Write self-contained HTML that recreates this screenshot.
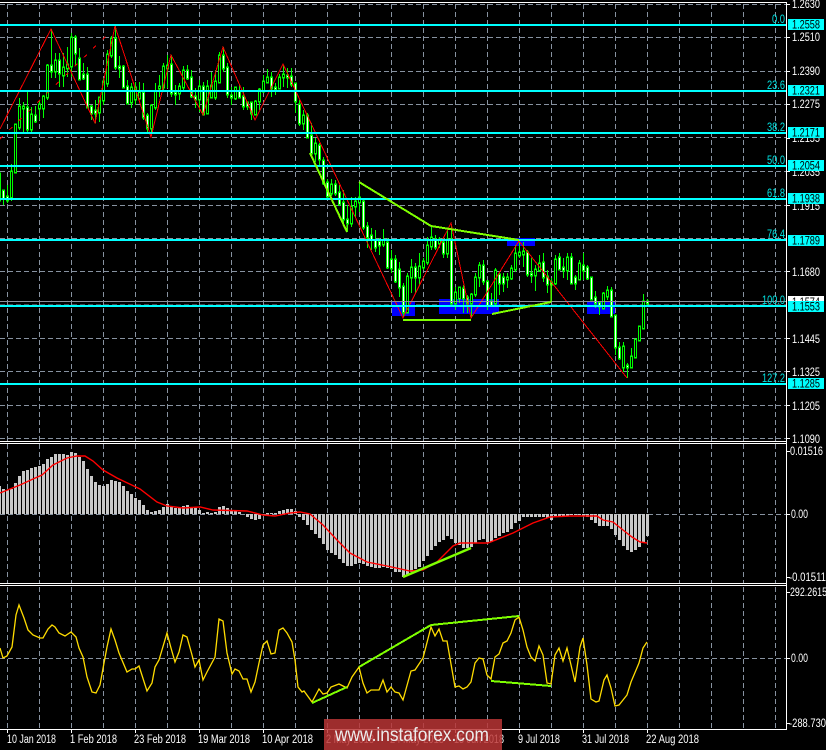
<!DOCTYPE html>
<html><head><meta charset="utf-8"><title>Chart</title>
<style>
html,body{margin:0;padding:0;background:#000;width:826px;height:750px;overflow:hidden}
svg{display:block;position:absolute;left:0;top:0}
text{font-family:"Liberation Sans",sans-serif;font-size:11.5px;fill:#fff}
.c{fill:#00e4e4}
</style></head><body>
<svg width="826" height="750" viewBox="0 0 826 750" xmlns="http://www.w3.org/2000/svg">
<rect width="826" height="750" fill="#000"/>
<defs>
<path id="bw" d="M-.5 174V200M11.5 172V197M15.5 125V172M19.5 107V127M23.5 107V108M31.5 115V129M39.5 105V108M43.5 97V108M47.5 66V97M55.5 61V71M63.5 68V75M67.5 65V68M71.5 38V66M99.5 98V112M103.5 82V100M107.5 55V83M111.5 39V55M131.5 88V102M135.5 88V99M139.5 93V98M151.5 106V128M155.5 92V107M159.5 87V88M163.5 67V87M167.5 66V68M179.5 87V93M183.5 71V87M199.5 87V99M207.5 87V113M211.5 86V97M215.5 82V97M219.5 56V82M235.5 88V98M255.5 102V114M259.5 90V101M263.5 82V91M267.5 78V82M279.5 78V88M283.5 75V77M303.5 116V123M315.5 144V153M331.5 185V193M351.5 207V223M355.5 202V206M359.5 198V202M383.5 241V244M407.5 277V312M411.5 268V277M419.5 267V277M423.5 262V267M427.5 246V262M431.5 238V246M439.5 240V243M447.5 240V253M455.5 293V303M459.5 288V298M471.5 295V303M475.5 278V294M479.5 266V277M495.5 271V303M507.5 278V279M511.5 269V278M515.5 254V269M519.5 253V255M523.5 252V254M535.5 270V275M539.5 264V270M555.5 260V283M567.5 258V270M579.5 264V279M603.5 294V308M607.5 291V296M623.5 347V367M631.5 357V367M635.5 340V357M639.5 327V340M643.5 302V328"/>
<path id="bb" d="M3.5 191V198M7.5 197V200M27.5 108V129M35.5 116V121M51.5 66V71M59.5 61V73M75.5 38V53M79.5 59V79M83.5 75V78M87.5 75V107M91.5 107V113M95.5 111V113M115.5 39V67M119.5 67V68M123.5 67V87M127.5 87V103M143.5 93V117M147.5 116V128M171.5 65V93M175.5 93V94M187.5 71V78M191.5 78V96M195.5 97V99M203.5 87V114M223.5 56V68M227.5 68V94M231.5 96V97M239.5 92V97M243.5 97V106M247.5 103V106M251.5 103V113M271.5 78V88M275.5 88V89M287.5 76V77M291.5 77V84M295.5 84V101M299.5 105V123M307.5 116V137M311.5 136V153M319.5 146V159M323.5 161V183M327.5 183V196M335.5 185V193M339.5 193V204M343.5 203V219M347.5 220V223M363.5 202V227M367.5 227V237M371.5 236V239M375.5 241V247M379.5 242V245M387.5 243V267M391.5 260V268M395.5 260V281M399.5 270V287M403.5 287V312M415.5 268V277M435.5 240V247M443.5 243V253M451.5 240V303M463.5 289V298M467.5 298V303M483.5 266V281M487.5 282V305M491.5 302V305M499.5 275V283M503.5 278V283M527.5 253V274M531.5 274V275M543.5 263V277M547.5 277V284M551.5 283V284M559.5 258V269M563.5 268V270M571.5 258V283M575.5 278V283M583.5 266V270M587.5 268V278M591.5 278V299M595.5 298V303M599.5 303V306M611.5 291V316M615.5 316V347M619.5 348V358M627.5 366V367M647.5 302V303"/>
</defs>

<!-- grid -->
<g shape-rendering="crispEdges" stroke="#8792a0" stroke-width="1" stroke-dasharray="5 3" fill="none">
<path d="M7.5 4V441M39.5 4V441M71.5 4V441M103.5 4V441M135.5 4V441M167.5 4V441M199.5 4V441M231.5 4V441M263.5 4V441M295.5 4V441M327.5 4V441M359.5 4V441M391.5 4V441M423.5 4V441M455.5 4V441M487.5 4V441M519.5 4V441M551.5 4V441M583.5 4V441M615.5 4V441M647.5 4V441M679.5 4V441M711.5 4V441M743.5 4V441M775.5 4V441"/>
<path d="M7.5 444V583M39.5 444V583M71.5 444V583M103.5 444V583M135.5 444V583M167.5 444V583M199.5 444V583M231.5 444V583M263.5 444V583M295.5 444V583M327.5 444V583M359.5 444V583M391.5 444V583M423.5 444V583M455.5 444V583M487.5 444V583M519.5 444V583M551.5 444V583M583.5 444V583M615.5 444V583M647.5 444V583M679.5 444V583M711.5 444V583M743.5 444V583M775.5 444V583"/>
<path d="M7.5 587V729M39.5 587V729M71.5 587V729M103.5 587V729M135.5 587V729M167.5 587V729M199.5 587V729M231.5 587V729M263.5 587V729M295.5 587V729M327.5 587V729M359.5 587V729M391.5 587V729M423.5 587V729M455.5 587V729M487.5 587V729M519.5 587V729M551.5 587V729M583.5 587V729M615.5 587V729M647.5 587V729M679.5 587V729M711.5 587V729M743.5 587V729M775.5 587V729"/>
<path d="M0 4.5H786M0 37.5H786M0 71.5H786M0 104.5H786M0 137.5H786M0 171.5H786M0 205.5H786M0 238.5H786M0 271.5H786M0 305H786M0 338.5H786M0 371.5H786M0 405.5H786M0 438.5H786M0 514.5H786M0 658.5H786"/>
</g>

<!-- blue zones -->
<g fill="#0000ff" shape-rendering="crispEdges">
<rect x="392" y="302" width="23" height="14"/>
<rect x="439" y="299" width="60" height="15"/>
<rect x="507" y="238" width="28" height="8"/>
<rect x="587" y="302" width="28" height="12"/>
</g>

<!-- candles -->
<g shape-rendering="crispEdges" fill="none">
<path stroke="#00ff00" stroke-width="1" d="M-.5 174V200M3.5 191V205M7.5 185V203M11.5 164V201M15.5 125V172M19.5 98V130M23.5 102V132M27.5 92V132M31.5 107V133M35.5 106V123M39.5 100V120M43.5 95V118M47.5 64V100M51.5 29V78M55.5 53V78M59.5 53V87M63.5 53V87M67.5 47V77M71.5 33V77M75.5 35V65M79.5 48V80M83.5 63V80M87.5 67V108M91.5 105V120M95.5 100V123M99.5 97V122M103.5 78V105M107.5 50V87M111.5 36V58M115.5 26V70M119.5 56V78M123.5 65V88M127.5 80V103M131.5 83V108M135.5 82V105M139.5 82V100M143.5 83V120M147.5 113V132M151.5 104V136M155.5 83V110M159.5 75V97M163.5 63V90M167.5 55V88M171.5 55V97M175.5 85V105M179.5 83V100M183.5 66V90M187.5 65V80M191.5 70V98M195.5 88V108M199.5 80V112M203.5 82V115M207.5 80V114M211.5 72V98M215.5 70V100M219.5 52V83M223.5 47V72M227.5 63V98M231.5 87V105M235.5 88V100M239.5 85V98M243.5 87V110M247.5 102V110M251.5 102V120M255.5 100V115M259.5 88V110M263.5 75V93M267.5 69V83M271.5 72V97M275.5 83V95M279.5 74V89M283.5 65V87M287.5 68V88M291.5 68V87M295.5 83V113M299.5 100V126M303.5 110V130M307.5 113V137M311.5 123V155M315.5 138V162M319.5 143V165M323.5 157V185M327.5 179V200M331.5 179V196M335.5 180V196M339.5 185V206M343.5 190V225M347.5 205V232M351.5 197V227M355.5 197V217M359.5 182V212M363.5 198V230M367.5 222V248M371.5 228V250M375.5 230V252M379.5 238V255M383.5 229V247M387.5 238V269M391.5 250V273M395.5 255V283M399.5 262V297M403.5 283V317M407.5 273V313M411.5 259V293M415.5 263V293M419.5 253V285M423.5 258V270M427.5 237V265M431.5 226V250M435.5 235V250M439.5 237V248M443.5 238V258M447.5 228V258M451.5 225V305M455.5 287V310M459.5 287V303M463.5 285V313M467.5 295V313M471.5 293V318M475.5 273V297M479.5 262V287M483.5 260V285M487.5 280V310M491.5 293V307M495.5 268V307M499.5 272V295M503.5 273V292M507.5 273V288M511.5 265V280M515.5 245V272M519.5 240V258M523.5 242V267M527.5 250V277M531.5 258V283M535.5 265V291M539.5 255V272M543.5 253V282M547.5 270V293M551.5 278V302M555.5 255V285M559.5 253V270M563.5 258V278M567.5 253V280M571.5 253V284M575.5 275V290M579.5 260V280M583.5 253V280M587.5 265V280M591.5 277V300M595.5 291V308M599.5 302V315M603.5 292V309M607.5 286V300M611.5 287V317M615.5 315V355M619.5 342V360M623.5 342V372M627.5 363V378M631.5 348V368M635.5 339V358M639.5 327V341M643.5 294V329M647.5 299V305"/>
<use href="#bw" stroke="#00ff00" stroke-width="3" stroke-linecap="square"/>
<use href="#bb" stroke="#00ff00" stroke-width="3" stroke-linecap="square"/>
<use href="#bw" stroke="#000" stroke-width="1"/>
<use href="#bb" stroke="#fff" stroke-width="1"/>
</g>

<!-- zigzag -->
<g fill="none" stroke="#ff0000" stroke-width="1" shape-rendering="crispEdges">
<polyline points="0,129 51,29 95,123 115,26 151,137 171,55 203,115 223,47 255,120 283,64 333,170 403,318 451,223 471,318 519,241 627,378"/>
<polyline points="0,139 110,32" stroke-dasharray="4 9"/>
</g>

<!-- ask line -->
<rect x="0" y="301" width="786" height="1" fill="#8a9099"/>

<!-- fibo -->
<g fill="#00ffff" shape-rendering="crispEdges">
<rect x="0" y="24" width="786" height="2"/>
<rect x="0" y="90" width="786" height="2"/>
<rect x="0" y="132" width="786" height="2"/>
<rect x="0" y="165" width="786" height="2"/>
<rect x="0" y="198" width="786" height="2"/>
<rect x="0" y="239" width="786" height="2"/>
<rect x="0" y="305" width="786" height="2"/>
<rect x="0" y="383" width="786" height="2"/>
</g>
<text class="c" x="772" y="23" textLength="13" lengthAdjust="spacingAndGlyphs">0.0</text>
<text class="c" x="767" y="89" textLength="18" lengthAdjust="spacingAndGlyphs">23.6</text>
<text class="c" x="767" y="131" textLength="18" lengthAdjust="spacingAndGlyphs">38.2</text>
<text class="c" x="767" y="164" textLength="18" lengthAdjust="spacingAndGlyphs">50.0</text>
<text class="c" x="767" y="197" textLength="18" lengthAdjust="spacingAndGlyphs">61.8</text>
<text class="c" x="767" y="238" textLength="18" lengthAdjust="spacingAndGlyphs">76.4</text>
<text class="c" x="762" y="304" textLength="23" lengthAdjust="spacingAndGlyphs">100.0</text>
<text class="c" x="762" y="382" textLength="23" lengthAdjust="spacingAndGlyphs">127.2</text>

<!-- green trend lines main -->
<g fill="none" stroke="#7fff00" stroke-width="2" shape-rendering="crispEdges">
<polyline points="310,153 347,232"/>
<polyline points="347,225 347,232" stroke-width="1"/>
<polyline points="359,182 431,226 519,240"/>
<polyline points="403,320 471,320"/>
<polyline points="492,314 551,302"/>
<polyline points="551,283 551,302" stroke-width="1"/>
</g>

<!-- MACD bars -->
<path shape-rendering="crispEdges" fill="none" stroke="#c8c8c8" stroke-width="3" d="M-.5 514V486M3.5 514V489M7.5 514V490M11.5 514V489M15.5 514V483M19.5 514V476M23.5 514V471M27.5 514V470M31.5 514V468M35.5 514V467M39.5 514V466M43.5 514V464M47.5 514V459M51.5 514V457M55.5 514V454M59.5 514V454M63.5 514V454M67.5 514V455M71.5 514V452M75.5 514V453M79.5 514V457M83.5 514V461M87.5 514V469M91.5 514V476M95.5 514V482M99.5 514V485M103.5 514V486M107.5 514V484M111.5 514V480M115.5 514V481M119.5 514V482M123.5 514V486M127.5 514V491M131.5 514V494M135.5 514V498M139.5 514V500M143.5 514V505M147.5 514V510M151.5 514V512M155.5 514V511M159.5 514V510M163.5 514V507M167.5 514V504M171.5 514V507M175.5 514V508M179.5 514V508M183.5 514V506M187.5 514V505M191.5 514V507M195.5 514V508M199.5 514V510M203.5 514V513M207.5 514V512M211.5 514V513M215.5 514V512M219.5 514V507M223.5 514V506M227.5 514V508M231.5 514V510M235.5 514V511M239.5 514V512M247.5 514V517M251.5 514V519M255.5 514V520M259.5 514V519M263.5 514V515M267.5 514V513M271.5 514V513M275.5 514V513M279.5 514V511M283.5 514V510M287.5 514V509M291.5 514V509M295.5 514V511M299.5 514V517M303.5 514V520M307.5 514V525M311.5 514V530M315.5 514V534M319.5 514V538M323.5 514V544M327.5 514V550M331.5 514V553M335.5 514V555M339.5 514V559M343.5 514V563M347.5 514V566M351.5 514V566M355.5 514V564M359.5 514V563M363.5 514V564M367.5 514V566M371.5 514V567M375.5 514V568M379.5 514V568M383.5 514V567M387.5 514V568M391.5 514V569M395.5 514V572M399.5 514V572M403.5 514V577M407.5 514V575M411.5 514V572M415.5 514V569M419.5 514V567M423.5 514V561M427.5 514V556M431.5 514V550M435.5 514V546M439.5 514V542M443.5 514V540M447.5 514V536M451.5 514V539M455.5 514V543M459.5 514V545M463.5 514V548M467.5 514V548M471.5 514V547M475.5 514V543M479.5 514V540M483.5 514V539M487.5 514V542M491.5 514V542M495.5 514V538M499.5 514V536M503.5 514V533M507.5 514V532M511.5 514V529M515.5 514V523M519.5 514V521M523.5 514V517M527.5 514V517M531.5 514V517M535.5 514V517M539.5 514V517M543.5 514V517M547.5 514V518M551.5 514V520M555.5 514V517M559.5 514V517M563.5 514V517M567.5 514V516M571.5 514V515M575.5 514V515M579.5 514V515M583.5 514V516M587.5 514V517M591.5 514V520M595.5 514V523M599.5 514V526M603.5 514V526M607.5 514V526M611.5 514V529M615.5 514V535M619.5 514V540M623.5 514V546M627.5 514V550M631.5 514V552M635.5 514V550M639.5 514V547M643.5 514V542M647.5 514V536"/>
<polyline fill="none" stroke="#ff0000" stroke-width="1.4" points="0,493 10,489 20,485 33,479 42,475 53,465 67,458 77,456 85,456 93,461 103,470 117,478 140,489 157,502 167,506 183,508 200,507 213,510 247,511 263,515 275,516 290,513 300,512 310,514 323,525 337,540 350,553 367,562 387,566 410,571 423,570 437,562 453,546 460,543 480,543 488,543 513,533 533,523 550,517 570,516 597,516 603,520 613,522 623,530 632,537 640,542 647,543"/>
<polyline fill="none" stroke="#7fff00" stroke-width="2.4" points="403,577 471,548"/>

<!-- CCI -->
<polyline fill="none" stroke="#ffdc00" stroke-width="1.3" points="0,648 3,658 7,656 12,647 16,615 19,605 24,618 28,630 33,635 40,638 43,638 48,629 52,625 55,627 59,633 65,636 71,632 76,637 79,648 83,657 87,677 92,692 96,693 100,685 104,663 107,647 111,629 115,640 119,653 127,672 132,669 135,669 139,666 147,691 152,683 155,667 159,660 167,633 171,648 175,662 179,652 183,635 187,637 192,655 195,667 199,660 203,680 207,672 215,657 219,619 223,621 227,653 232,674 235,669 239,671 243,679 247,679 251,692 255,682 259,663 263,645 267,641 271,654 275,653 279,630 283,628 287,633 292,642 295,660 298,687 302,692 304,691 312,702 319,689 323,694 327,693 331,687 339,684 347,688 352,677 359,667 363,683 367,693 371,690 379,690 383,680 387,692 391,687 395,692 399,693 403,700 411,671 415,670 423,658 431,627 435,636 439,629 443,641 447,641 455,687 459,686 463,689 467,687 471,682 475,663 479,658 483,659 487,675 491,679 495,657 499,654 503,643 507,641 511,633 515,620 519,617 523,630 527,647 531,657 535,661 539,646 543,655 547,683 551,684 555,655 559,648 563,661 567,648 575,682 580,647 583,638 587,665 591,699 596,702 599,701 604,680 607,675 611,688 615,706 619,705 627,695 631,682 639,663 643,648 647,642"/>
<g fill="none" stroke="#7fff00" stroke-width="2" shape-rendering="crispEdges">
<polyline points="312,703 347,687"/>
<polyline points="359,667 431,625 519,616"/>
<polyline points="491,681 551,686"/>
</g>

<!-- frames -->
<g fill="#fff" shape-rendering="crispEdges">
<rect x="0" y="2" width="787" height="1"/>
<rect x="0" y="441" width="787" height="1"/>
<rect x="0" y="443" width="787" height="1"/>
<rect x="0" y="583" width="787" height="1"/>
<rect x="0" y="585" width="787" height="1"/>
<rect x="0" y="729" width="787" height="1"/>
<rect x="786" y="2" width="1" height="728"/>
<path d="M787 4h3v1h-3zM787 37h3v1h-3zM787 71h3v1h-3zM787 104h3v1h-3zM787 138h3v1h-3zM787 171h3v1h-3zM787 205h3v1h-3zM787 271h3v1h-3zM787 338h3v1h-3zM787 371h3v1h-3zM787 405h3v1h-3zM787 438h3v1h-3zM787 451h3v1h-3zM787 514h3v1h-3zM787 577h3v1h-3zM787 592h3v1h-3zM787 658h3v1h-3zM787 723h3v1h-3z"/>
<path d="M7 730h1v3h-1zM71 730h1v3h-1zM135 730h1v3h-1zM199 730h1v3h-1zM263 730h1v3h-1zM327 730h1v3h-1zM391 730h1v3h-1zM455 730h1v3h-1zM519 730h1v3h-1zM583 730h1v3h-1zM647 730h1v3h-1z"/>
</g>

<!-- price axis -->
<g>
<text x="792" y="8" textLength="28" lengthAdjust="spacingAndGlyphs">1.2630</text>
<text x="792" y="41" textLength="28" lengthAdjust="spacingAndGlyphs">1.2510</text>
<text x="792" y="75" textLength="28" lengthAdjust="spacingAndGlyphs">1.2390</text>
<text x="792" y="108" textLength="28" lengthAdjust="spacingAndGlyphs">1.2275</text>
<text x="792" y="142" textLength="28" lengthAdjust="spacingAndGlyphs">1.2155</text>
<text x="792" y="176" textLength="28" lengthAdjust="spacingAndGlyphs">1.2035</text>
<text x="792" y="210" textLength="28" lengthAdjust="spacingAndGlyphs">1.1915</text>
<text x="792" y="276" textLength="28" lengthAdjust="spacingAndGlyphs">1.1680</text>
<text x="792" y="343" textLength="28" lengthAdjust="spacingAndGlyphs">1.1445</text>
<text x="792" y="376" textLength="28" lengthAdjust="spacingAndGlyphs">1.1325</text>
<text x="792" y="410" textLength="28" lengthAdjust="spacingAndGlyphs">1.1205</text>
<text x="792" y="443" textLength="28" lengthAdjust="spacingAndGlyphs">1.1090</text>
<text x="790" y="455" textLength="33" lengthAdjust="spacingAndGlyphs">0.01516</text>
<text x="791" y="518" textLength="17" lengthAdjust="spacingAndGlyphs">0.00</text>
<text x="789" y="581" textLength="37" lengthAdjust="spacingAndGlyphs">-0.01511</text>
<text x="790" y="596" textLength="37" lengthAdjust="spacingAndGlyphs">292.2615</text>
<text x="791" y="662" textLength="17" lengthAdjust="spacingAndGlyphs">0.00</text>
<text x="789" y="727" textLength="37" lengthAdjust="spacingAndGlyphs">-288.730</text>
</g>
<rect x="788" y="296" width="36" height="11" fill="#fff"/>
<text x="792" y="306" style="fill:#000" textLength="28" lengthAdjust="spacingAndGlyphs">1.1574</text>
<g fill="#00ffff" shape-rendering="crispEdges">
<rect x="788" y="19" width="36" height="11"/>
<rect x="788" y="85" width="36" height="11"/>
<rect x="788" y="127" width="36" height="11"/>
<rect x="788" y="160" width="36" height="11"/>
<rect x="788" y="193" width="36" height="11"/>
<rect x="788" y="235" width="36" height="11"/>
<rect x="788" y="301" width="36" height="11"/>
<rect x="788" y="378" width="36" height="11"/>
</g>
<g>
<text style="fill:#000" x="792" y="28.5" textLength="28" lengthAdjust="spacingAndGlyphs">1.2558</text>
<text style="fill:#000" x="792" y="94.5" textLength="28" lengthAdjust="spacingAndGlyphs">1.2321</text>
<text style="fill:#000" x="792" y="136.5" textLength="28" lengthAdjust="spacingAndGlyphs">1.2171</text>
<text style="fill:#000" x="792" y="169.5" textLength="28" lengthAdjust="spacingAndGlyphs">1.2054</text>
<text style="fill:#000" x="792" y="202.5" textLength="28" lengthAdjust="spacingAndGlyphs">1.1938</text>
<text style="fill:#000" x="792" y="244.5" textLength="28" lengthAdjust="spacingAndGlyphs">1.1789</text>
<text style="fill:#000" x="792" y="310.5" textLength="28" lengthAdjust="spacingAndGlyphs">1.1553</text>
<text style="fill:#000" x="792" y="387.5" textLength="28" lengthAdjust="spacingAndGlyphs">1.1285</text>
</g>

<!-- date axis -->
<g>
<text x="7" y="743" textLength="49" lengthAdjust="spacingAndGlyphs">10 Jan 2018</text>
<text x="70" y="743" textLength="47" lengthAdjust="spacingAndGlyphs">1 Feb 2018</text>
<text x="134" y="743" textLength="52" lengthAdjust="spacingAndGlyphs">23 Feb 2018</text>
<text x="198" y="743" textLength="52" lengthAdjust="spacingAndGlyphs">19 Mar 2018</text>
<text x="262" y="743" textLength="51" lengthAdjust="spacingAndGlyphs">10 Apr 2018</text>
<text x="326" y="743" textLength="48" lengthAdjust="spacingAndGlyphs">2 May 2018</text>
<text x="390" y="743" textLength="54" lengthAdjust="spacingAndGlyphs">24 May 2018</text>
<text x="454" y="743" textLength="50" lengthAdjust="spacingAndGlyphs">15 Jun 2018</text>
<text x="518" y="743" textLength="42" lengthAdjust="spacingAndGlyphs">9 Jul 2018</text>
<text x="582" y="743" textLength="47" lengthAdjust="spacingAndGlyphs">31 Jul 2018</text>
<text x="646" y="743" textLength="53" lengthAdjust="spacingAndGlyphs">22 Aug 2018</text>
</g>

<!-- watermark -->
<rect x="324" y="719" width="178" height="31" fill="#bb3636" fill-opacity=".84"/>
<text x="335" y="741" style="font-size:19px;fill:#ececec" textLength="154" lengthAdjust="spacingAndGlyphs">www.instaforex.com</text>
</svg>
</body></html>
